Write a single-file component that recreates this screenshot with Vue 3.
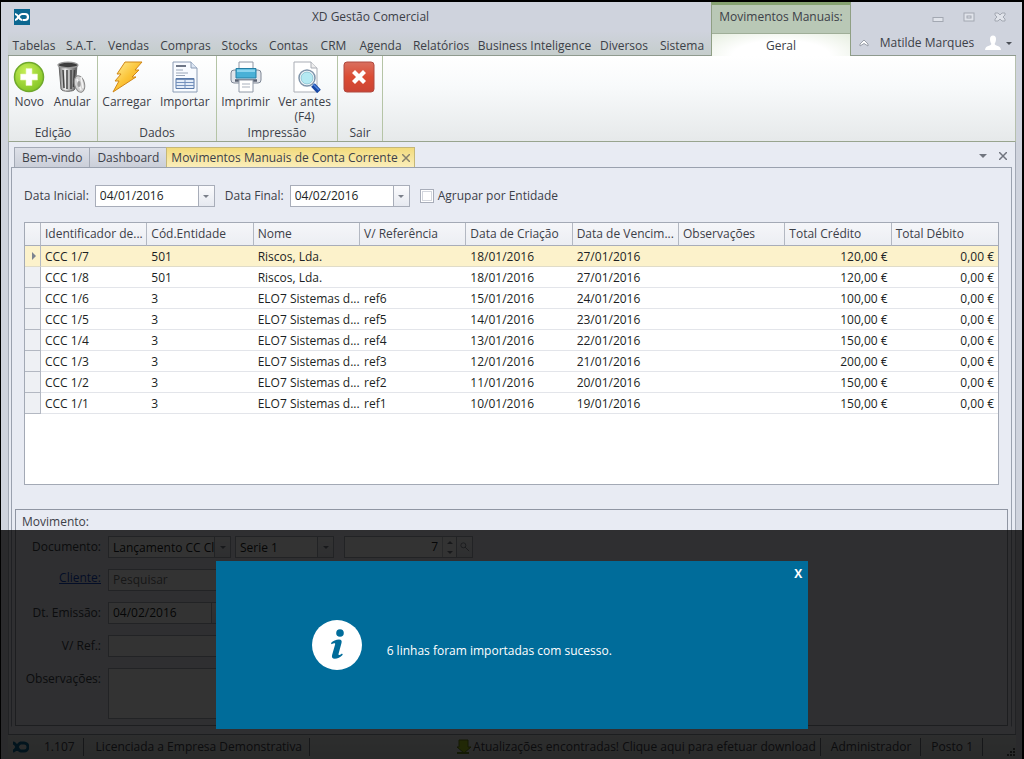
<script setup>
import { ref } from 'vue'

const menus = ['Tabelas', 'S.A.T.', 'Vendas', 'Compras', 'Stocks', 'Contas', 'CRM', 'Agenda', 'Relatórios', 'Business Inteligence', 'Diversos', 'Sistema']
const columns = ['Identificador de...', 'Cód.Entidade', 'Nome', 'V/ Referência', 'Data de Criação', 'Data de Vencim...', 'Observações', 'Total Crédito', 'Total Débito']
const name = 'ELO7 Sistemas d...'
const rows = [
  ['CCC 1/7', '501', 'Riscos, Lda.', '', '18/01/2016', '27/01/2016', '', '120,00 €', '0,00 €'],
  ['CCC 1/8', '501', 'Riscos, Lda.', '', '18/01/2016', '27/01/2016', '', '120,00 €', '0,00 €'],
  ['CCC 1/6', '3', name, 'ref6', '15/01/2016', '24/01/2016', '', '100,00 €', '0,00 €'],
  ['CCC 1/5', '3', name, 'ref5', '14/01/2016', '23/01/2016', '', '100,00 €', '0,00 €'],
  ['CCC 1/4', '3', name, 'ref4', '13/01/2016', '22/01/2016', '', '150,00 €', '0,00 €'],
  ['CCC 1/3', '3', name, 'ref3', '12/01/2016', '21/01/2016', '', '200,00 €', '0,00 €'],
  ['CCC 1/2', '3', name, 'ref2', '11/01/2016', '20/01/2016', '', '150,00 €', '0,00 €'],
  ['CCC 1/1', '3', name, 'ref1', '10/01/2016', '19/01/2016', '', '150,00 €', '0,00 €'],
]
const selected = ref(0)
const startDate = ref('04/01/2016')
const endDate = ref('04/02/2016')
const issueDate = ref('04/02/2016')
const grouped = ref(false)
const showNotice = ref(true)
</script>

<template>
  <div class="window">
    <header class="titlebar">
      <div class="title-left">
        <div class="title-row">
          <svg class="logo" viewBox="0 0 16 16"><rect width="16" height="16" fill="#0b6790" /><path d="M1 5c3.500 0 3.500 6 7 6M1 11c3.500 0 3.500-6 7-6h3a3 3 0 0 1 0 6H8.500" fill="none" stroke="#fff" stroke-width="2.200" /></svg>
          <h1>XD Gestão Comercial</h1>
        </div>
        <nav class="menu">
          <button v-for="m in menus" :key="m" type="button">{{ m }}</button>
        </nav>
      </div>
      <div class="context">
        <div class="context-title">Movimentos Manuais:</div>
        <button type="button" class="context-tab">Geral</button>
      </div>
      <div class="title-right">
        <div class="win-buttons">
          <button type="button" aria-label="Minimizar"><svg viewBox="0 0 12 12"><rect x="1" y="6.500" width="10" height="4" /></svg></button>
          <button type="button" aria-label="Restaurar"><svg viewBox="0 0 12 12"><rect x="1" y="2" width="10" height="8" /><rect x="4" y="5" width="4" height="2" /></svg></button>
          <button type="button" aria-label="Fechar"><svg viewBox="0 0 12 12"><path d="M1 2h3l2 2 2-2h3v2L9 6l2 2v2H8L6 8l-2 2H1V8l2-2-2-2z" /></svg></button>
        </div>
        <div class="user-row">
          <button type="button" class="collapse" aria-label="Recolher friso"><svg viewBox="0 0 10 8"><path d="M1 5l4-4 4 4v2L5 4.500 1 7z" /></svg></button>
          <span class="user-name">Matilde Marques</span>
          <button type="button" class="user" aria-label="Conta">
            <svg class="avatar" viewBox="0 0 16 16"><path d="M5 4a3 3.500 0 0 1 6 0c0 2.500-.8 4-1.300 4.800 0 1.200 1 1.400 3 2.200 2 .7 2.800 1.200 3.300 4H0c.5-2.800 1.300-3.300 3.300-4 2-.8 3-1 3-2.200C5.800 8 5 6.500 5 4z" fill="#fff" /></svg>
            <span class="caret"></span>
          </button>
        </div>
      </div>
    </header>

    <div class="ribbon">
      <section class="group g1">
        <div class="tools">
          <button type="button">
            <svg viewBox="0 0 32 32"><defs><radialGradient id="gn" cx=".4" cy=".3" r=".8"><stop offset="0" stop-color="#c6ee57" /><stop offset="1" stop-color="#7cc01f" /></radialGradient></defs><circle cx="16" cy="16" r="14.500" fill="url(#gn)" stroke="#6fa82c" stroke-width="1.500" /><path d="M13 7.500h6V13h5.500v6H19v5.500h-6V19H7.500v-6H13z" fill="#fff" stroke="#e4f6b0" stroke-width=".6" /></svg>
            <span>Novo</span>
          </button>
          <button type="button">
            <svg viewBox="0 0 32 32"><defs><linearGradient id="tr"><stop offset="0" stop-color="#777" /><stop offset=".35" stop-color="#eee" /><stop offset=".7" stop-color="#999" /><stop offset="1" stop-color="#555" /></linearGradient></defs><path d="M3 4l2 24c1 3 13 3 14 0l2-24z" fill="url(#tr)" stroke="#666" /><path d="M7 9l1 18M11 9v19M15 9v19M18.500 9l-1 17" stroke="#444" stroke-width="1.500" /><ellipse cx="12" cy="4" rx="10" ry="2.800" fill="#3c3c3c" stroke="#999" stroke-width="1.300" /><ellipse cx="23.500" cy="23" rx="5" ry="8.500" transform="rotate(-14 23.500 23)" fill="#d2d2d2" stroke="#888" /><path d="M21 18l4 11M25 16l2 11" stroke="#f4f4f4" stroke-width="1.500" /><ellipse cx="23" cy="23" rx="1.600" ry="3" fill="#999" /></svg>
            <span>Anular</span>
          </button>
        </div>
        <h2>Edição</h2>
      </section>
      <section class="group g2">
        <div class="tools">
          <button type="button">
            <svg viewBox="0 0 32 32"><defs><linearGradient id="bo" x2="1" y2="1"><stop offset="0" stop-color="#fff1a0" /><stop offset=".5" stop-color="#fbc437" /><stop offset="1" stop-color="#ef9710" /></linearGradient></defs><path d="M14 1h17l-7 8h4l-7 7h4L2 31l6-11H4l6-7H6z" fill="url(#bo)" stroke="#cf8718" stroke-linejoin="round" /></svg>
            <span>Carregar</span>
          </button>
          <button type="button">
            <svg viewBox="0 0 32 32"><path d="M4 1h18l6 6v24H4z" fill="#f8fbff" stroke="#8b9cb5" /><path d="M22 1v6h6" fill="#dce6f3" stroke="#8b9cb5" /><path d="M7 5h10" stroke="#4c566a" stroke-width="1.600" /><path d="M7 9h7M7 12h12M7 14.500h9" stroke="#9aa6b8" /><path d="M7 17.500h18v10H7z" fill="#e3ecf8" stroke="#5878a8" /><path d="M7 18h18" stroke="#5878a8" stroke-width="1.600" /><path d="M7 21.500h18M7 24.500h18M16 18v10" stroke="#7491bd" /></svg>
            <span>Importar</span>
          </button>
        </div>
        <h2>Dados</h2>
      </section>
      <section class="group g3">
        <div class="tools">
          <button type="button">
            <svg viewBox="0 0 32 32"><path d="M9 1h14v9H9z" fill="#fdfdfe" stroke="#8f98a6" /><rect x="1" y="9" width="30" height="13" rx="3" fill="#e1e4ea" stroke="#7e8795" /><path d="M6 7.500h20V17H6z" fill="#49b0d6" stroke="#257fa5" /><path d="M7 8.500h18v2.500H7z" fill="#8bd4ee" /><path d="M5 19.500h22" stroke="#596170" stroke-width="2.500" /><path d="M9 19h14v12H9z" fill="#fff" stroke="#8f98a6" /><path d="M12 23h8M12 26h8" stroke="#a9b1bd" /></svg>
            <span>Imprimir</span>
          </button>
          <button type="button">
            <svg viewBox="0 0 32 32"><path d="M5 1h17l6 6v24H5z" fill="#fff" stroke="#a9adb5" /><path d="M22 1v6h6" fill="#eee" stroke="#a9adb5" /><path d="M24 24l6 6.500" stroke="#1746a2" stroke-width="5" /><path d="M24 23l6 6" stroke="#4f86e0" stroke-width="1.500" /><circle cx="18" cy="17" r="8" fill="#fff" stroke="#7f95ab" stroke-width="1.500" /><circle cx="18" cy="17" r="6" fill="#b4e9f2" stroke="#8fc6d6" /></svg>
            <span>Ver antes<br />(F4)</span>
          </button>
        </div>
        <h2>Impressão</h2>
      </section>
      <section class="group g4">
        <div class="tools">
          <button type="button" aria-label="Sair">
            <svg viewBox="0 0 32 32"><defs><linearGradient id="rd" y2="1" x2="0"><stop offset="0" stop-color="#d9705f" /><stop offset=".5" stop-color="#db4c34" /><stop offset="1" stop-color="#cb4434" /></linearGradient></defs><rect x="1" y="1" width="30" height="30" rx="3" fill="url(#rd)" stroke="#b04a40" /><path d="M9 12l3-3 4 4 4-4 3 3-4 4 4 4-3 3-4-4-4 4-3-3 4-4z" fill="#fff" /></svg>
          </button>
        </div>
        <h2>Sair</h2>
      </section>
    </div>

    <main class="workspace">
      <div class="tabstrip">
        <button type="button" class="tab">Bem-vindo</button>
        <button type="button" class="tab">Dashboard</button>
        <button type="button" class="tab active">Movimentos Manuais de Conta Corrente
          <svg viewBox="0 0 8 8"><path d="M0 0l8 8M8 0L0 8" /></svg>
        </button>
        <div class="strip-tools">
          <button type="button" aria-label="Lista de separadores"><span class="caret"></span></button>
          <button type="button" aria-label="Fechar separador"><svg viewBox="0 0 8 8"><path d="M0 0l8 8M8 0L0 8" /></svg></button>
        </div>
      </div>

      <div class="page">
        <div class="filters">
          <div class="pair">
            <label for="start">Data Inicial:</label>
            <div class="combo date"><input id="start" v-model="startDate" type="text" /><button type="button" aria-label="Escolher data inicial"><span class="caret"></span></button></div>
          </div>
          <div class="pair">
            <label for="end">Data Final:</label>
            <div class="combo date"><input id="end" v-model="endDate" type="text" /><button type="button" aria-label="Escolher data final"><span class="caret"></span></button></div>
          </div>
          <label class="check"><input v-model="grouped" type="checkbox" />Agrupar por Entidade</label>
        </div>

        <div class="grid">
          <table>
            <colgroup><col class="marker" /><col v-for="c in columns" :key="c" /></colgroup>
            <thead>
              <tr><th></th><th v-for="c in columns" :key="c" scope="col">{{ c }}</th></tr>
            </thead>
            <tbody>
              <tr v-for="(r, i) in rows" :key="i" :class="{ current: i === selected }" @click="selected = i">
                <td class="marker"><span v-if="i === selected" class="pointer"></span></td>
                <td v-for="(v, j) in r" :key="j" :class="{ num: j > 6 }">{{ v }}</td>
              </tr>
            </tbody>
          </table>
        </div>

        <section class="movement">
          <h2>Movimento:</h2>
          <div class="form">
            <label for="doc">Documento:</label>
            <div class="line">
              <div class="combo doc"><select id="doc"><option>Lançamento CC Cl</option></select><span class="drop"><span class="caret"></span></span></div>
              <div class="combo serie"><select aria-label="Série"><option>Serie 1</option></select><span class="drop"><span class="caret"></span></span></div>
              <div class="combo number">
                <input type="text" value="7" aria-label="Número" />
                <span class="spin"><span class="caret up"></span><span class="caret"></span></span>
                <button type="button" aria-label="Procurar"><svg viewBox="0 0 12 12"><circle cx="4" cy="4" r="3" /><path d="M6 6l5 5" /></svg></button>
              </div>
            </div>
            <a href="#" class="client">Cliente:</a>
            <div class="combo wide"><input type="text" placeholder="Pesquisar" aria-label="Cliente" /></div>
            <label for="issue">Dt. Emissão:</label>
            <div class="combo date"><input id="issue" v-model="issueDate" type="text" /><button type="button" aria-label="Escolher data"><span class="caret"></span></button></div>
            <label for="refn">V/ Ref.:</label>
            <div class="combo wide"><input id="refn" type="text" /></div>
            <label for="obs">Observações:</label>
            <div class="combo wide tall"><textarea id="obs"></textarea></div>
          </div>
        </section>
      </div>
    </main>

    <footer class="status">
      <span class="cell version"><svg class="logo" viewBox="0 0 16 16"><path d="M0 4c4 0 4 8 8 8M0 12c4 0 4-8 8-8M7 4h4a4 4 0 0 1 0 8H7" fill="none" stroke="#0b6790" stroke-width="3" /></svg>1.107</span>
      <span class="cell license">Licenciada a Empresa Demonstrativa</span>
      <a href="#" class="cell update"><svg viewBox="0 0 16 16"><path d="M4 1h9v7h3l-7 6-7-6h2z" fill="#a5c51f" stroke="#66801a" /><path d="M2 13h12v2H2z" fill="#66801a" /></svg>Atualizações encontradas! Clique aqui para efetuar download</a>
      <span class="cell">Administrador</span>
      <span class="cell">Posto 1</span>
      <svg class="grip" viewBox="0 0 8 8"><path d="M6 0h2v2H6zM6 3h2v2H6zM3 3h2v2H3zM6 6h2v2H6zM3 6h2v2H3zM0 6h2v2H0z" fill="#555" /></svg>
    </footer>

    <div v-if="showNotice" class="overlay">
      <div class="dialog" role="dialog" aria-label="Informação">
        <button type="button" class="close" aria-label="Fechar" @click="showNotice = false">X</button>
        <svg class="info" viewBox="0 0 50 50"><circle cx="25" cy="25" r="25" fill="#fff" /><circle cx="28" cy="13" r="3.800" fill="#006c9a" /><path d="M19 23c2-2 5-3.500 8-3.500 2.500 0 3 1.500 2.500 3.500l-3 11c-.3 1.500.8 1.500 3.500-.5l.8 1.200c-2.500 2.800-5.300 4-8 4-2.500 0-3.300-1.600-2.700-3.700l3-10.500c.4-1.600-.6-1.800-3.600-.3z" fill="#006c9a" /></svg>
        <p>6 linhas foram importadas com sucesso.</p>
      </div>
    </div>
  </div>
</template>

<style>
body { margin: 0; }
</style>

<style scoped>
* { box-sizing: border-box; }
.window { position: relative; display: flex; flex-direction: column; min-height: 100vh; padding: 0 6px 0 7px; border: 1px solid #000; border-width: 2px 2px 0 1px; background: #cfd3dd; color: #3c4048; font: 12px/16px "Open Sans", "Noto Sans", sans-serif; }
button { font: inherit; color: inherit; background: none; border: 0; padding: 0; white-space: nowrap; }
h1, h2, p { margin: 0; font: inherit; }
svg { display: block; }

.titlebar { display: grid; grid-template-columns: minmax(0, 703fr) 140px 165px; height: 54px; }
.title-left { display: flex; flex-direction: column; border-bottom: 1px solid #8f9a8f; }
.title-row { display: flex; align-items: center; height: 29px; padding-left: 6px; }
.logo { width: 16px; height: 16px; }
.title-row h1 { flex: 1; text-align: center; }
.menu { flex: 1; display: grid; grid-template-columns: 52fr 42fr 53fr 61fr 47fr 51fr 39fr 55fr 66fr 121fr 58fr 58fr; background: linear-gradient(#cfd3dd, #c5cdcc); }
.menu button { min-width: 0; padding-top: 5px; display: flex; justify-content: center; align-items: center; }
.context { display: flex; flex-direction: column; border: 1px solid #8f9f84; border-top: 3px solid #87a372; border-bottom: 0; background: #b9c8b6; }
.context-title { height: 28px; line-height: 23px; text-align: center; }
.context-tab { flex: 1; background: radial-gradient(ellipse at 50% 100%, #fff 50%, #e6eee0); border-top: 1px solid #9fae98; padding-top: 2px; }
.title-right { display: flex; flex-direction: column; border-bottom: 1px solid #8f9a8f; }
.win-buttons { display: flex; justify-content: flex-end; align-items: center; gap: 19px; height: 29px; padding-right: 10px; }
.win-buttons svg { width: 12px; height: 12px; fill: #e0e3ea; stroke: #a3a8b2; }
.user-row { display: flex; align-items: center; height: 24px; padding-left: 8px; }
.collapse svg { width: 10px; height: 8px; fill: #fff; stroke: #9a9fa9; }
.user-name { flex: 1; text-align: center; white-space: nowrap; }
.user { display: flex; align-items: center; gap: 5px; padding-right: 4px; }
.avatar { width: 16px; height: 16px; }
.caret { display: inline-block; border: 3px solid transparent; border-top-color: #4b4f57; border-bottom: 0; }

.ribbon { display: flex; height: 86px; background: linear-gradient(#fff, #f8fafb 35%, #e6e9ea); border: 1px solid #b6c0ae; border-top: 0; border-bottom-color: #98a48e; }
.group { display: flex; flex-direction: column; justify-content: space-between; border-right: 1px solid #b5c4a6; }
.g1 { width: 89px; }
.g2 { width: 119px; }
.g3 { width: 121px; }
.g4 { width: 45px; }
.group h2 { text-align: center; }
.tools { display: flex; justify-content: center; padding: 5px 2px 0 0; }
.tools button { flex: 1 1 auto; display: flex; flex-direction: column; align-items: center; line-height: 15px; }
.tools svg { width: 32px; height: 32px; margin-bottom: 1px; }

.workspace { flex: 1; display: flex; flex-direction: column; background: #e8ebf3; border: 1px solid #a3a9b5; border-top: 0; border-bottom: 0; padding: 5px 3px 7px 2px; }
.tabstrip { display: flex; padding-left: 3px; height: 20px; }
.tab { padding: 0 7px; border: 1px solid #a3a9b5; border-bottom: 0; border-right: 0; background: linear-gradient(#dde0e8, #cbcfd9); }
.tab.active { display: flex; align-items: center; gap: 4px; padding: 0 4px; border-color: #c5b778; border-right: 1px solid #c5b778; background: linear-gradient(#f2db7c, #fbeebb); }
.tab svg, .strip-tools svg { width: 8px; height: 8px; stroke: #85806c; stroke-width: 1.500; }
.strip-tools { display: flex; align-items: center; gap: 12px; margin-left: auto; padding: 0 5px 3px 0; }
.strip-tools .caret { border-width: 4px; border-bottom: 0; border-top-color: #70757f; display: block; }
.strip-tools svg { stroke: #70757f; }
.page { flex: 1; display: flex; flex-direction: column; border: 1px solid #9aa1ae; border-bottom-color: transparent; padding: 17px 3px 0; }
.filters { display: flex; align-items: center; padding-left: 9px; gap: 10px; height: 22px; }
.pair { display: flex; align-items: center; gap: 6px; }
.combo { display: flex; height: 22px; background: #fff; border: 1px solid #a8adb9; }
.combo input, .combo select, .combo textarea { flex: 1; min-width: 0; width: 100%; font: inherit; color: #1c1f24; background: none; border: 0; padding: 0 0 0 4px; margin: 0; outline: 0; appearance: none; resize: none; }
.combo button, .drop { width: 16px; flex: none; display: flex; align-items: center; justify-content: center; background: linear-gradient(#fbfbfd, #e6e9f0); border-left: 1px solid #a8adb9; }
.combo .caret { border-top-color: #7a7f89; }
.combo .caret.up { border: 3px solid transparent; border-bottom-color: #7a7f89; border-top: 0; }
.date { width: 120px; }
.check { display: flex; align-items: center; gap: 4px; }
.check input { appearance: none; width: 14px; height: 14px; margin: 0; background: #fff; border: 1px solid #a8adb9; box-shadow: inset 0 0 0 1px #fff, inset 0 0 0 2px #d3d6dd; }
.check input:checked { background: #4b6f9b; }

.grid { margin: 15px 9px 0; height: 263px; background: #fff; border: 1px solid #a3a9b5; overflow: hidden; }
table { width: 100%; table-layout: fixed; border-collapse: separate; border-spacing: 0; }
col.marker { width: 16px; }
th, td { padding: 0 0 0 4px; white-space: nowrap; text-align: left; font-weight: 400; }
th { height: 23px; background: linear-gradient(#f5f6f9, #eceef3); border-bottom: 1px solid #a8adb9; border-right: 1px solid #b3b8c2; }
td { height: 21px; color: #1c1f24; border-bottom: 1px solid #e3e5ea; line-height: 19px; }
th:last-child { border-right: 0; }
td.marker { background: #eef0f4; border-right: 1px solid #b3b8c2; border-bottom-color: #b3b8c2; }
td.num { text-align: right; padding-right: 4px; }
.current td { background: #fcf2cb; border-bottom-color: #e0dcc8; }
.pointer { display: block; width: 4px; margin-left: 3px; border: 4px solid transparent; border-left-color: #7c8390; border-right: 0; }

.movement { flex: 1; margin-top: 24px; border: 1px solid #8f95a2; padding: 4px 0; }
.movement h2 { padding-left: 6px; }
.form { display: grid; grid-template-columns: 85px auto; justify-content: start; column-gap: 7px; row-gap: 11px; padding-top: 6px; line-height: 22px; }
.form > label, .client { text-align: right; white-space: nowrap; }
.client { color: #1748c0; text-decoration: underline; line-height: 18px; }
.line { display: flex; gap: 4px; }
.doc { width: 123px; }
.serie { width: 99px; }
.number { width: 129px; margin-left: 6px; }
.number input { text-align: right; padding-right: 4px; }
.spin { width: 14px; border-left: 1px solid #c7cad2; display: flex; flex-direction: column; align-items: center; justify-content: space-around; }
.number svg { width: 10px; height: 10px; fill: none; stroke: #7a7f89; }
.wide { width: 560px; }
.tall { height: 51px; }

.status { display: flex; align-items: center; height: 25px; border-top: 1px solid #8f95a2; background: linear-gradient(#e0e3e4, #cfd4d3); }
.cell { height: 18px; padding: 0 9px 0 10px; border-right: 1px solid #6f747c; line-height: 18px; white-space: nowrap; color: #3c4048; text-decoration: none; }
.version { display: flex; align-items: center; gap: 15px; padding: 0 8px 0 5px; }
.license { padding: 0 7px 0 12px; }
.update { display: flex; align-items: center; gap: 2px; margin-left: auto; padding-right: 4px; }
.update svg { width: 16px; height: 16px; }
.grip { width: 8px; height: 8px; margin: 10px 1px 0 24px; }

.overlay { position: absolute; left: 0; right: -1px; bottom: 0; height: 229px; background: rgba(0, 0, 0, .8); display: flex; justify-content: center; align-items: flex-start; padding-top: 31px; }
.dialog { width: 58%; height: 168px; background: #006c9a; color: #fff; display: flex; align-items: center; gap: 25px; padding-left: 96px; position: relative; }
.close { position: absolute; top: 5px; right: 6px; font-weight: 700; }
.info { width: 50px; height: 50px; }
.dialog p { padding-top: 12px; }
</style>
